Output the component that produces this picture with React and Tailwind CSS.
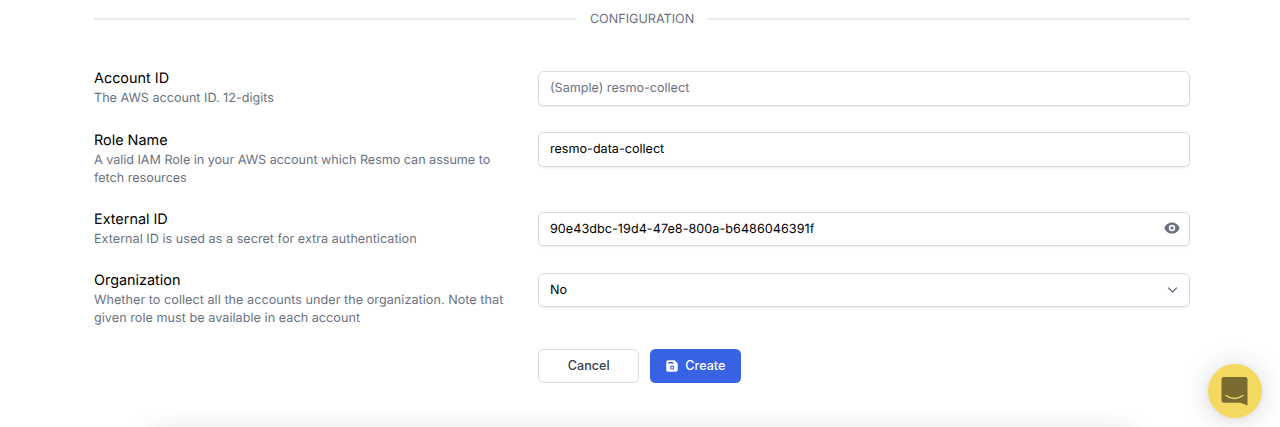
import React from "react";
import { HiEye } from "react-icons/hi";

function Field({ label, description, tracking = "", children }) {
  return (
    <div className="grid grid-cols-[413px_1fr] gap-x-[31px]">
      <div className="-mb-[1px] pt-[0.6px]">
        <div className="text-[14.4px] leading-[21.6px] text-black">{label}</div>
        <p className={`pt-[0.4px] text-[12.6px] leading-[18px] text-gray-500 ${tracking}`}>{description}</p>
      </div>
      <div className="pt-[3.4px]">{children}</div>
    </div>
  );
}

function SaveIcon() {
  return (
    <svg className="size-[12px]" viewBox="0 0 12 12">
      <path
        fill="currentColor"
        fillRule="evenodd"
        d="M2 .3h6.600L11.700 3.400V10a1.700 1.700 0 0 1-1.700 1.700H2A1.700 1.700 0 0 1 .3 10V2A1.700 1.700 0 0 1 2 .3zM2.300 2v1.500h5.200V2zM6.200 5.600a2.100 2.100 0 1 0 0 4.200a2.100 2.100 0 1 0 0-4.200zM6.200 6.700a1 1 0 1 1 0 2a1 1 0 1 1 0-2z"
      />
    </svg>
  );
}

const box =
  "flex h-[34.5px] w-full items-center justify-between rounded-[5.4px] border border-[#d9dade] bg-white pl-[11px] pr-[9px] text-[12.6px] leading-[18px] shadow-[0_1px_2px_rgba(0,0,0,0.08)]";

export default function App() {
  return (
    <main className="relative h-[427px] w-[1280px] overflow-hidden bg-white font-['Inter',sans-serif] [text-rendering:geometricPrecision]">
      <div className="pl-[94px] pr-[90px] pt-[10.4px]">
        <div className="flex items-center gap-[14px] text-[12.6px] leading-[18px] text-gray-500">
          <div className="-mt-[1.400px] h-[2px] flex-1 bg-[#e8e9ee]" />
          <h2 className="-mb-[1px] pt-[1px]">CONFIGURATION</h2>
          <div className="-mt-[1.400px] h-[2px] flex-1 bg-[#e8e9ee]" />
        </div>
        <form className="mt-[39.4px] flex flex-col gap-[21.7px]">
          <Field label="Account ID" description="The AWS account ID. 12-digits">
            <div className={box}>
              <span className="pt-[1.600px] text-gray-500">(Sample) resmo-collect</span>
            </div>
          </Field>
          <Field
            label="Role Name"
            tracking="tracking-[-0.02px]"
            description="A valid IAM Role in your AWS account which Resmo can assume to fetch resources"
          >
            <div className={box}>
              <span className="pt-[1.600px]">resmo-data-collect</span>
            </div>
          </Field>
          <Field
            label="External ID"
            tracking="tracking-[0.03px]"
            description="External ID is used as a secret for extra authentication"
          >
            <div className={box}>
              <span className="pt-[1.600px] tracking-[0.05px]">90e43dbc-19d4-47e8-800a-b6486046391f</span>
              <HiEye className="mb-[2px] size-4 text-gray-500" />
            </div>
          </Field>
          <Field
            label="Organization"
            tracking="tracking-[0.05px]"
            description="Whether to collect all the accounts under the organization. Note that given role must be available in each account"
          >
            <div className={box}>
              <span className="pt-[1.600px]">No</span>
              <svg className="h-[14px] w-[14px] text-gray-500" viewBox="0 0 14 14" fill="none" stroke="currentColor" strokeWidth="1.3" strokeLinecap="round" strokeLinejoin="round">
                <path d="M2.500 5l4 4 4-4" />
              </svg>
            </div>
          </Field>
        </form>
        <div className="mt-[21.6px] flex gap-[11px] pl-[444px] text-[12.6px] font-medium leading-[18px]">
          <button className="h-[34.5px] w-[101.4px] rounded-[5.4px] border border-[#d9dade] bg-white text-gray-700">
            Cancel
          </button>
          <button className="flex h-[34.5px] w-[91px] items-center justify-center gap-[7px] rounded-[5.4px] bg-[#3662e3] text-white">
            <SaveIcon />
            Create
          </button>
        </div>
      </div>
      <div className="absolute left-[154px] top-[434px] h-10 w-[976px] shadow-[0_0_26px_3px_rgba(0,0,0,0.13)]" />
      <button className="absolute left-[1208px] top-[364px] flex size-[54px] items-center justify-center rounded-full bg-[#f4d960] shadow-[0_1px_5px_rgba(0,0,0,0.06),0_2px_28px_rgba(0,0,0,0.16)]">
        <svg className="mr-[1px] h-[30px] w-[27px]" viewBox="0 0 27 30">
          <path d="M3 1h21a2.500 2.500 0 0 1 2.500 2.500V29.500l-7-2.800H3A2.500 2.500 0 0 1 .5 24.200V3.500A2.500 2.500 0 0 1 3 1z" fill="#7a6c30" />
          <path d="M5 19.500c5 4 12 4 17 0" fill="none" stroke="#f4d960" strokeWidth="1.600" strokeLinecap="round" />
        </svg>
      </button>
    </main>
  );
}
